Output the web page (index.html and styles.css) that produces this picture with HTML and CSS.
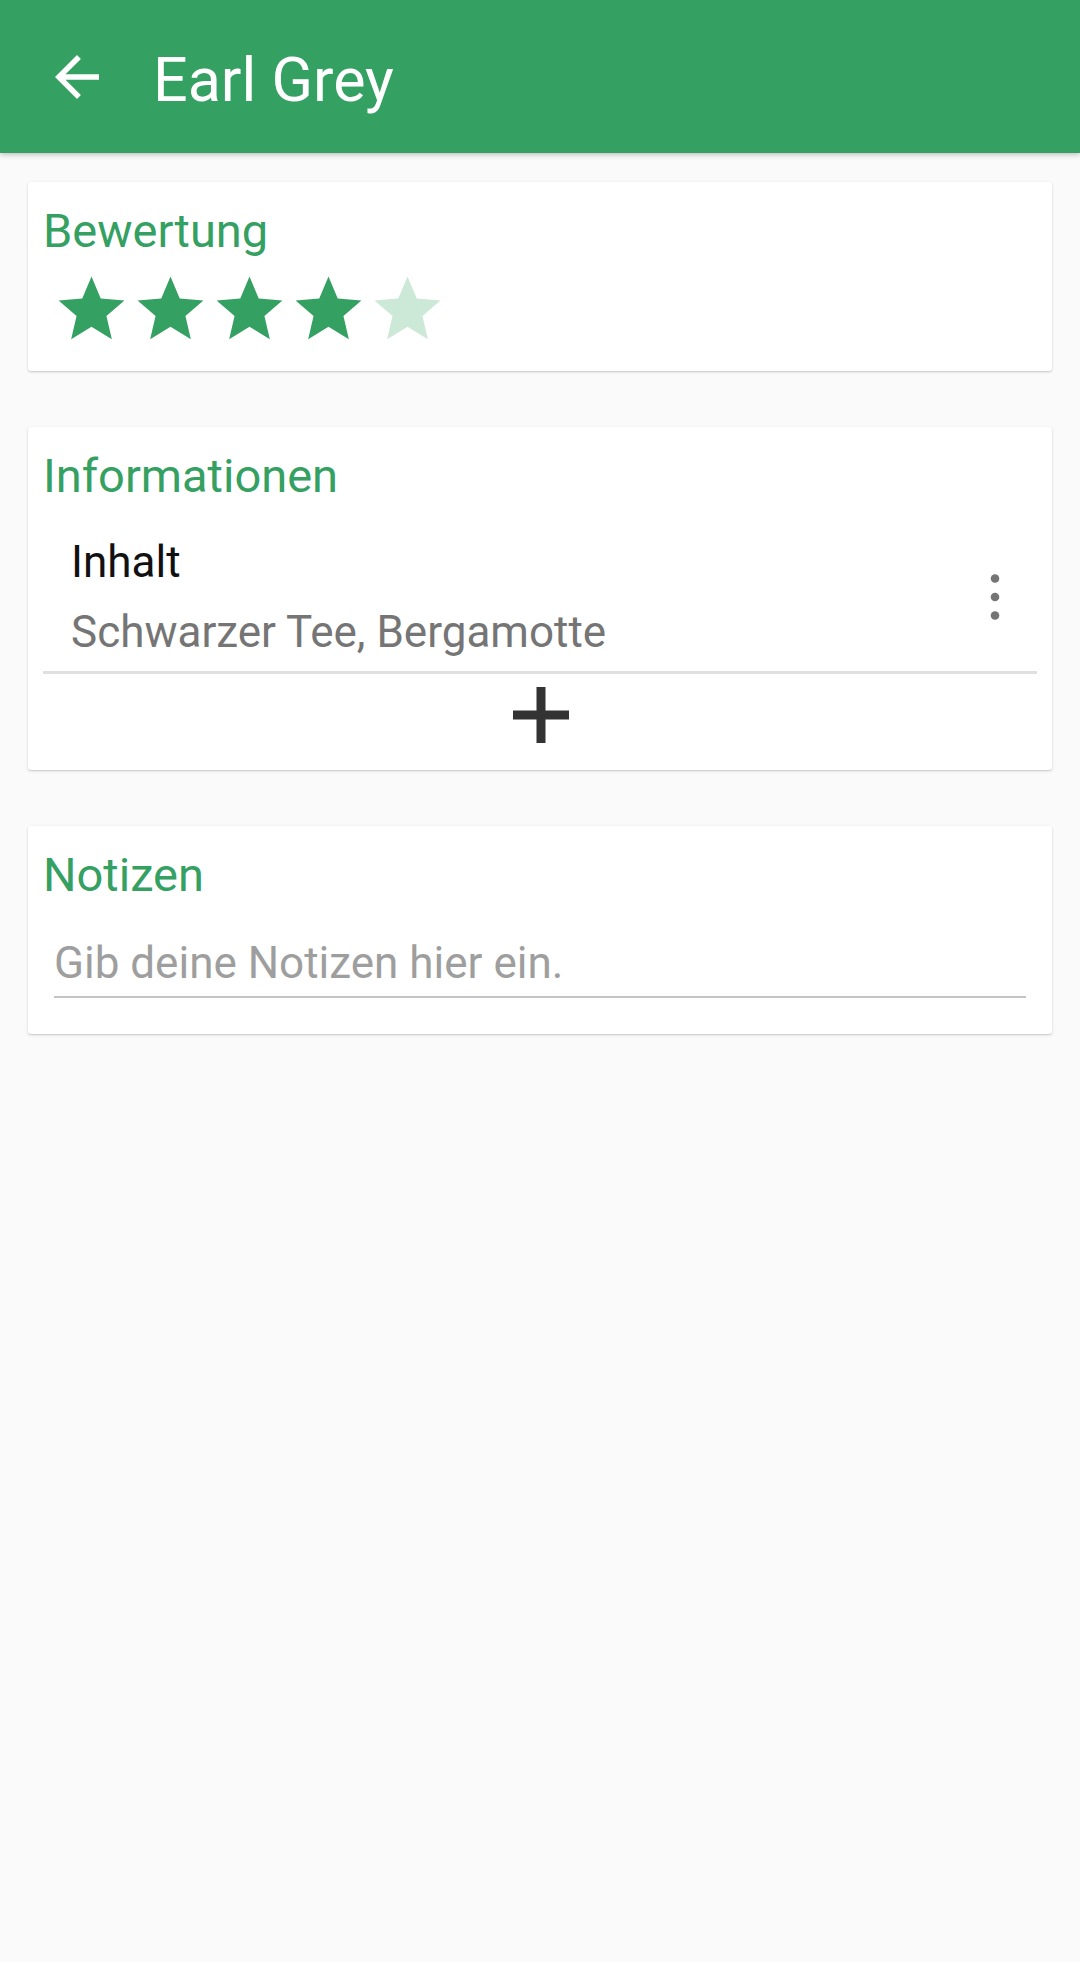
FILE: index.html
```
<!DOCTYPE html>
<html lang="de">
<head>
<meta charset="utf-8">
<title>Earl Grey</title>
<link rel="stylesheet" href="styles.css">
</head>
<body>
<header class="appbar">
  <svg class="back" viewBox="0 0 24 24" width="66" height="66"><path d="M20 11H7.83l5.59-5.59L12 4l-8 8 8 8 1.41-1.41L7.83 13H20v-2z" fill="#fff"/></svg>
  <h1 class="appbar-title">Earl Grey</h1>
</header>
<main class="content">
  <section class="card card-rating">
    <h2 class="card-title">Bewertung</h2>
    <div class="stars">
      <svg class="star on" viewBox="0 0 24 24"><path d="M12 17.27L18.18 21l-1.64-7.03L22 9.24l-7.19-.61L12 2 9.19 8.63 2 9.24l5.46 4.73L5.82 21z"/></svg>
      <svg class="star on" viewBox="0 0 24 24"><path d="M12 17.27L18.18 21l-1.64-7.03L22 9.24l-7.19-.61L12 2 9.19 8.63 2 9.24l5.46 4.73L5.82 21z"/></svg>
      <svg class="star on" viewBox="0 0 24 24"><path d="M12 17.27L18.18 21l-1.64-7.03L22 9.24l-7.19-.61L12 2 9.19 8.63 2 9.24l5.46 4.73L5.82 21z"/></svg>
      <svg class="star on" viewBox="0 0 24 24"><path d="M12 17.27L18.18 21l-1.64-7.03L22 9.24l-7.19-.61L12 2 9.19 8.63 2 9.24l5.46 4.73L5.82 21z"/></svg>
      <svg class="star off" viewBox="0 0 24 24"><path d="M12 17.27L18.18 21l-1.64-7.03L22 9.24l-7.19-.61L12 2 9.19 8.63 2 9.24l5.46 4.73L5.82 21z"/></svg>
    </div>
  </section>
  <section class="card card-info">
    <h2 class="card-title">Informationen</h2>
    <div class="info-item">
      <div class="info-text">
        <div class="info-label">Inhalt</div>
        <div class="info-value">Schwarzer Tee, Bergamotte</div>
      </div>
      <svg class="more" viewBox="0 0 12 46" width="12" height="46"><circle cx="6" cy="4.5" r="4.3"/><circle cx="6" cy="23" r="4.3"/><circle cx="6" cy="41.5" r="4.3"/></svg>
    </div>
    <div class="add-row">
      <svg class="add" viewBox="0 0 56 56" width="56" height="56"><path d="M23.5 0h9v23.5H56v9H32.5V56h-9V32.5H0v-9h23.5z"/></svg>
    </div>
  </section>
  <section class="card card-notes">
    <h2 class="card-title">Notizen</h2>
    <div class="note-input"><span class="placeholder">Gib deine Notizen hier ein.</span></div>
  </section>
</main>
</body>
</html>
```
FILE: styles.css
```
* { box-sizing: border-box; }
html, body {
  margin: 0;
  padding: 0;
}
body {
  background: #fafafa;
  font-family: Roboto, "Noto Sans", "Liberation Sans", sans-serif;
  width: 1080px;
  min-height: 1962px;
}
.appbar {
  height: 153px;
  background: #34a062;
  display: flex;
  align-items: center;
  padding-left: 44px;
  box-shadow: 0 2px 5px rgba(0,0,0,0.22);
  position: relative;
  z-index: 1;
}
.back {
  display: block;
  flex: none;
}
.appbar-title {
  margin: 0 0 0 43px;
  padding-top: 7px;
  font-size: 61px;
  line-height: 61px;
  font-weight: 400;
  color: #fff;
}
.content {
  padding: 29px 28px;
  display: flex;
  flex-direction: column;
  gap: 56px;
}
.card {
  background: #fff;
  border-radius: 3px;
  box-shadow: 0 1px 3px rgba(0,0,0,0.16), 0 1px 1px rgba(0,0,0,0.07);
  padding: 21px 15px 0;
}
.card-title {
  margin: 0;
  font-size: 47px;
  line-height: 56px;
  font-weight: 400;
  color: #34a062;
}
.card-rating { padding-bottom: 22px; }
.stars {
  display: flex;
  margin-top: 11px;
  margin-left: 9px;
}
.star {
  width: 79px;
  height: 79px;
  display: block;
}
.star.on { fill: #34a062; }
.star.off { fill: #cce8d7; }

.info-item {
  display: flex;
  align-items: center;
  margin-top: 23px;
  padding: 0 36px 4px 28px;
  border-bottom: 3px solid #e0e0e0;
}
.info-text { flex: 1; }
.info-label {
  font-size: 44px;
  line-height: 70px;
  color: #111;
}
.info-value {
  font-size: 44px;
  line-height: 70px;
  color: #757575;
}
.more {
  display: block;
  fill: #757575;
  flex: none;
}
.add-row {
  display: flex;
  justify-content: center;
  padding: 13px 0 27px;
}
.add {
  display: block;
  fill: #333;
  margin-left: 2px;
}
.card-notes { padding-bottom: 36px; }
.note-input {
  margin: 30px 11px 0;
  padding-bottom: 3px;
  border-bottom: 2px solid #c4c4c4;
  font-size: 44px;
  line-height: 60px;
}
.placeholder { color: #9e9e9e; }
```
